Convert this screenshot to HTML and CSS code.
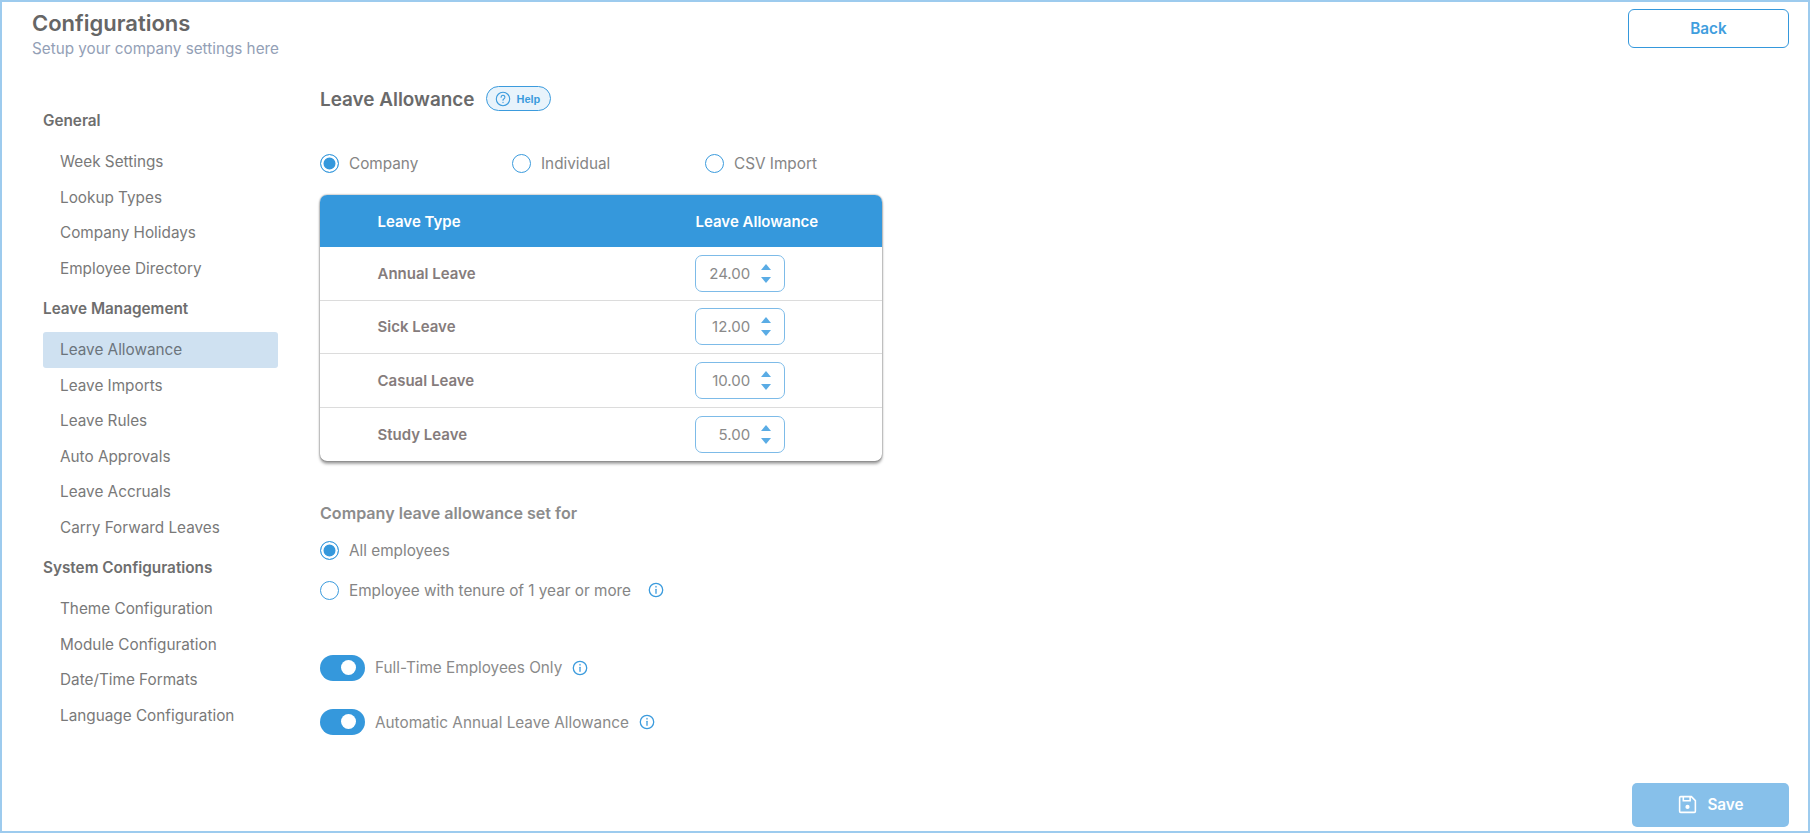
FILE: index.html
```html
<!DOCTYPE html>
<html lang="en">
<head>
<meta charset="utf-8">
<title>Configurations</title>
<link rel="stylesheet" href="styles.css">
</head>
<body>
<div class="frame">
  <header class="top">
    <div>
      <h1>Configurations</h1>
      <p class="sub">Setup your company settings here</p>
    </div>
    <button class="back">Back</button>
  </header>
  <div class="cols">
    <nav class="side">
      <h3>General</h3>
      <a>Week Settings</a><a>Lookup Types</a><a>Company Holidays</a><a>Employee Directory</a>
      <h3>Leave Management</h3>
      <a class="on">Leave Allowance</a><a>Leave Imports</a><a>Leave Rules</a><a>Auto Approvals</a><a>Leave Accruals</a><a>Carry Forward Leaves</a>
      <h3>System Configurations</h3>
      <a>Theme Configuration</a><a>Module Configuration</a><a>Date/Time Formats</a><a>Language Configuration</a>
    </nav>
    <main class="main">
      <div class="title">
        <h2>Leave Allowance</h2>
        <span class="help">
          <svg viewBox="0 0 16 16" class="ic-help"><circle cx="8" cy="8" r="6.7"/><path d="M6.1 6.2a1.9 1.9 0 1 1 2.9 1.6c-.7.4-1 .8-1 1.5"/><path d="M8 11.2v.4"/></svg>
          Help
        </span>
      </div>
      <div class="tabs">
        <label class="radio tab1"><i class="dot sel"></i>Company</label>
        <label class="radio tab2"><i class="dot"></i>Individual</label>
        <label class="radio"><i class="dot"></i>CSV Import</label>
      </div>
      <div class="table">
        <div class="row head"><span>Leave Type</span><span class="head-col">Leave Allowance</span></div>
        <div class="row"><b>Annual Leave</b><div class="num">24.00<span class="arrows"><i class="up"></i><i class="down"></i></span></div></div>
        <div class="row"><b>Sick Leave</b><div class="num">12.00<span class="arrows"><i class="up"></i><i class="down"></i></span></div></div>
        <div class="row"><b>Casual Leave</b><div class="num">10.00<span class="arrows"><i class="up"></i><i class="down"></i></span></div></div>
        <div class="row"><b>Study Leave</b><div class="num">5.00<span class="arrows"><i class="up"></i><i class="down"></i></span></div></div>
      </div>
      <h4>Company leave allowance set for</h4>
      <label class="radio opt"><i class="dot sel"></i>All employees</label>
      <label class="radio opt"><i class="dot"></i>Employee with tenure of 1 year or more
        <svg viewBox="0 0 16 16" class="info gap"><circle cx="8" cy="8" r="6.7"/><path d="M8 7.3v4"/><path d="M8 4.5v.6"/></svg>
      </label>
      <div class="sw first"><i class="toggle"></i>Full-Time Employees Only
        <svg viewBox="0 0 16 16" class="info"><circle cx="8" cy="8" r="6.7"/><path d="M8 7.3v4"/><path d="M8 4.5v.6"/></svg>
      </div>
      <div class="sw"><i class="toggle"></i>Automatic Annual Leave Allowance
        <svg viewBox="0 0 16 16" class="info"><circle cx="8" cy="8" r="6.7"/><path d="M8 7.3v4"/><path d="M8 4.5v.6"/></svg>
      </div>
    </main>
  </div>
  <button class="save">
    <svg viewBox="0 0 20 20" class="ic-save"><path d="M2.5 3.5a1 1 0 0 1 1-1h10.2l3.8 3.8v10.2a1 1 0 0 1-1 1h-13a1 1 0 0 1-1-1z"/><path d="M6 2.5v4h6.5v-4"/><circle cx="10" cy="12.3" r="2" class="fill"/></svg>
    Save
  </button>
</div>
</body>
</html>
```
FILE: styles.css
```css
* { box-sizing: border-box; }
html, body { margin: 0; height: 100%; }
body { font-family: Inter, "Liberation Sans", sans-serif; color: #7b7b7b; background: #fff; overflow: hidden; }
.frame { height: 833px; border: 2px solid #9dcbee; padding: 0 19px 0 30px; position: relative; }
.top { display: flex; justify-content: space-between; align-items: flex-start; height: 72px; padding-top: 7px; }
h1 { margin: 0; font-size: 22px; line-height: 28px; font-weight: 600; color: #666; }
.sub { margin: 2px 0 0; font-size: 15.25px; line-height: 20px; color: #93a0b6; }
.back { width: 161px; height: 39px; background: #fff; border: 1.5px solid #3598dc; border-radius: 6px; color: #3f9ede; font: 600 15.3px Inter, sans-serif; }
.cols { display: flex; }
.side { width: 288px; padding: 24.7px 0 0 11px; flex: none; }
.side h3 { margin: 0; font-size: 15.3px; line-height: 20px; font-weight: 600; color: #6e6e6e; padding: 12.5px 0 13px; height: 45.5px; }
.side a { display: block; width: 235px; height: 35.6px; line-height: 35px; padding-left: 17px; font-size: 15.3px; color: #797979; border-radius: 3px; }
.side a.on { background: #cfe1f1; color: #6b747c; }
.main { flex: 1; }
.title { display: flex; align-items: center; height: 40px; margin-top: 5px; }
h2 { margin: 0; font-size: 18.9px; font-weight: 600; color: #6a6a6a; }
.help { display: inline-flex; align-items: center; gap: 5px; margin-left: 12px; margin-top: -1px; width: 65px; height: 25px; padding-left: 8px; border: 1.5px solid #3b9bdd; border-radius: 13px; background: #e8f3fb; color: #3b9bdd; font: 700 11px "Liberation Sans", Arial, sans-serif; }
svg { fill: none; stroke: #3b9bdd; stroke-width: 1.3; stroke-linecap: round; flex: none; }
.ic-help { width: 16px; height: 16px; stroke-width: 1.1; }
.radio { display: flex; align-items: center; font-size: 15.3px; color: #858585; }
.dot { width: 19px; height: 19px; border: 1.5px solid #3b9bdd; border-radius: 50%; margin-right: 10px; background: #fff; flex: none; }
.dot.sel { background: #3598dc; box-shadow: inset 0 0 0 2.5px #fff; }
.tabs { display: flex; margin-top: 33px; height: 22px; }
.tab1 { width: 192px; }
.tab2 { width: 193px; }
.table { width: 562px; margin-top: 21px; border-radius: 7px; box-shadow: 0 0 2px rgba(0,0,0,.55), 0 3px 3px rgba(0,0,0,.35); overflow: hidden; background: #fff; }
.row { display: grid; grid-template-columns: 317px 1fr; align-items: center; height: 53.6px; padding-left: 57.5px; border-bottom: 1px solid #dcdcdc; font-size: 15px; }
.row:last-child { border-bottom: 0; }
.row b { font-weight: 600; color: #857c7c; }
.head { height: 52px; background: #3598dc; color: #fff; font-weight: 600; border: 0; }
.head-col { padding-left: 1px; }
.num { width: 90px; height: 37px; border: 1.2px solid #7dbbe8; border-radius: 7px; display: flex; align-items: center; justify-content: flex-end; padding-right: 12.3px; color: #8a8a8a; font-size: 15px; }
.arrows { display: flex; flex-direction: column; gap: 7px; margin-left: 11px; }
.arrows i { display: block; border-left: 5.5px solid transparent; border-right: 5.5px solid transparent; }
.up { border-bottom: 6px solid #5aace5; }
.down { border-top: 6px solid #5aace5; }
h4 { margin: 41.5px 0 0; font-size: 16.1px; line-height: 20px; font-weight: 600; color: #8c8c8c; }
.opt { height: 20px; }
h4 + .opt { margin-top: 17.5px; }
.opt + .opt { margin-top: 20px; }
.info { width: 16px; height: 16px; margin-left: 10px; }
.info.gap { margin-left: 17px; }
.sw { display: flex; align-items: center; height: 27px; margin-top: 27.5px; font-size: 15.3px; color: #8a8a8a; }
.sw.first { margin-top: 54px; }
.toggle { width: 45px; height: 26px; border-radius: 13px; background: #3598dc; margin-right: 10px; position: relative; }
.toggle::after { content: ""; position: absolute; left: 21px; top: 5px; width: 15px; height: 15px; border-radius: 50%; background: #fff; }
.save { position: absolute; right: 19px; bottom: 4.5px; width: 157px; height: 44px; display: flex; align-items: center; justify-content: center; gap: 9px; border: 0; border-radius: 5px; background: #87c0ea; color: #fff; font: 600 15.3px Inter, sans-serif; }
.ic-save { width: 21px; height: 21px; stroke: #fff; stroke-width: 1.5; stroke-linecap: butt; }
.ic-save .fill { fill: #fff; stroke: none; }
```
